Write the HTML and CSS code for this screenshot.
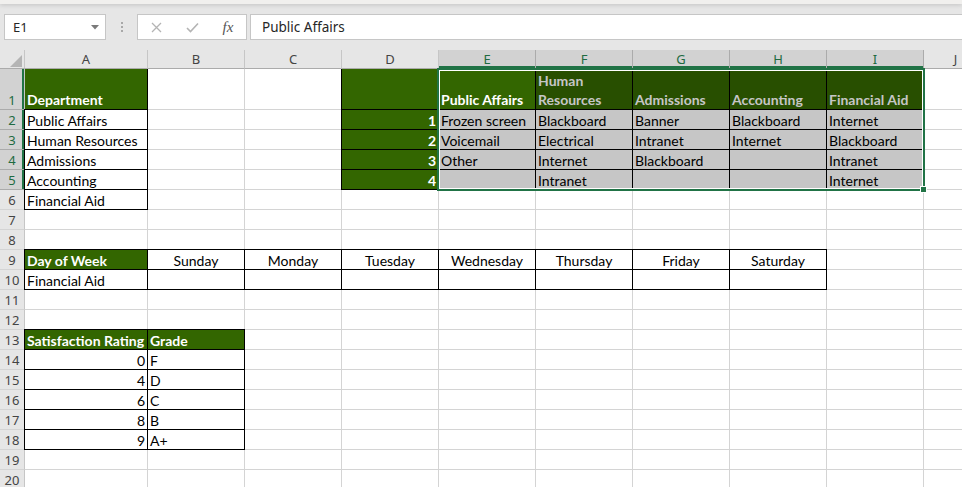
FILE: index.html
```html
<!DOCTYPE html>
<html>
<head>
<meta charset="utf-8">
<link rel="stylesheet" href="styles.css">
</head>
<body>
<div class="app">
  <div class="top"></div>
  <div class="fbar">
    <div class="namebox"><span>E1</span><svg class="caret" width="8" height="5" viewBox="0 0 8 5"><polygon points="0,0 8,0 4,4.5" fill="#7a7a7a"/></svg></div>
    <div class="grip"><i></i><i></i><i></i></div>
    <div class="btns">
      <span class="btn"><svg width="11" height="11" viewBox="0 0 11 11"><path d="M1 1 L10 10 M10 1 L1 10" stroke="#b4b4b4" stroke-width="1.3" fill="none"/></svg></span>
      <span class="btn"><svg width="13" height="11" viewBox="0 0 13 11"><path d="M1 6 L4.5 9.5 L12 1.5" stroke="#b4b4b4" stroke-width="1.6" fill="none"/></svg></span>
      <span class="btn fx">fx</span>
    </div>
    <div class="formula">Public Affairs</div>
  </div>
  <div class="sheet">
    <div class="corner"><svg width="12" height="12" viewBox="0 0 12 12"><polygon points="12,0 12,12 0,12" fill="#b4b4b4"/></svg></div>
    <div class="ch">A</div><div class="ch">B</div><div class="ch">C</div><div class="ch">D</div>
    <div class="ch on">E</div><div class="ch on">F</div><div class="ch on">G</div><div class="ch on">H</div><div class="ch on">I</div>
    <div class="ch">J</div>

    <div class="rh on">1</div>
    <div class="c t g b nt nl">Department</div><div class="c"></div><div class="c"></div>
    <div class="c t g b nt"></div>
    <div class="c t g b nt">Public Affairs</div>
    <div class="c t gs b nt">Human Resources</div>
    <div class="c t gs b nt">Admissions</div>
    <div class="c t gs b nt">Accounting</div>
    <div class="c t gs b nt">Financial Aid</div>
    <div class="c"></div>

    <div class="rh on">2</div>
    <div class="c b nl">Public Affairs</div><div class="c"></div><div class="c"></div>
    <div class="c g b r">1</div>
    <div class="c s b">Frozen screen</div><div class="c s b">Blackboard</div><div class="c s b">Banner</div><div class="c s b">Blackboard</div><div class="c s b">Internet</div>
    <div class="c"></div>

    <div class="rh on">3</div>
    <div class="c b nl">Human Resources</div><div class="c"></div><div class="c"></div>
    <div class="c g b r">2</div>
    <div class="c s b">Voicemail</div><div class="c s b">Electrical</div><div class="c s b">Intranet</div><div class="c s b">Internet</div><div class="c s b">Blackboard</div>
    <div class="c"></div>

    <div class="rh on">4</div>
    <div class="c b nl">Admissions</div><div class="c"></div><div class="c"></div>
    <div class="c g b r">3</div>
    <div class="c s b">Other</div><div class="c s b">Internet</div><div class="c s b">Blackboard</div><div class="c s b"></div><div class="c s b">Intranet</div>
    <div class="c"></div>

    <div class="rh on">5</div>
    <div class="c b nl">Accounting</div><div class="c"></div><div class="c"></div>
    <div class="c g b r">4</div>
    <div class="c s b"></div><div class="c s b">Intranet</div><div class="c s b"></div><div class="c s b"></div><div class="c s b">Internet</div>
    <div class="c"></div>

    <div class="rh">6</div>
    <div class="c b">Financial Aid</div><div class="c"></div><div class="c"></div><div class="c"></div><div class="c"></div><div class="c"></div><div class="c"></div><div class="c"></div><div class="c"></div><div class="c"></div>

    <div class="rh">7</div>
    <div class="c"></div><div class="c"></div><div class="c"></div><div class="c"></div><div class="c"></div><div class="c"></div><div class="c"></div><div class="c"></div><div class="c"></div><div class="c"></div>

    <div class="rh">8</div>
    <div class="c"></div><div class="c"></div><div class="c"></div><div class="c"></div><div class="c"></div><div class="c"></div><div class="c"></div><div class="c"></div><div class="c"></div><div class="c"></div>

    <div class="rh">9</div>
    <div class="c g b">Day of Week</div>
    <div class="c b ctr">Sunday</div><div class="c b ctr">Monday</div><div class="c b ctr">Tuesday</div><div class="c b ctr">Wednesday</div><div class="c b ctr">Thursday</div><div class="c b ctr">Friday</div><div class="c b ctr">Saturday</div>
    <div class="c"></div><div class="c"></div>

    <div class="rh">10</div>
    <div class="c b">Financial Aid</div>
    <div class="c b"></div><div class="c b"></div><div class="c b"></div><div class="c b"></div><div class="c b"></div><div class="c b"></div><div class="c b"></div>
    <div class="c"></div><div class="c"></div>

    <div class="rh">11</div>
    <div class="c"></div><div class="c"></div><div class="c"></div><div class="c"></div><div class="c"></div><div class="c"></div><div class="c"></div><div class="c"></div><div class="c"></div><div class="c"></div>

    <div class="rh">12</div>
    <div class="c"></div><div class="c"></div><div class="c"></div><div class="c"></div><div class="c"></div><div class="c"></div><div class="c"></div><div class="c"></div><div class="c"></div><div class="c"></div>

    <div class="rh">13</div>
    <div class="c g b gr">Satisfaction Rating</div><div class="c g b nl">Grade</div>
    <div class="c"></div><div class="c"></div><div class="c"></div><div class="c"></div><div class="c"></div><div class="c"></div><div class="c"></div><div class="c"></div>

    <div class="rh">14</div>
    <div class="c b r">0</div><div class="c b">F</div>
    <div class="c"></div><div class="c"></div><div class="c"></div><div class="c"></div><div class="c"></div><div class="c"></div><div class="c"></div><div class="c"></div>

    <div class="rh">15</div>
    <div class="c b r">4</div><div class="c b">D</div>
    <div class="c"></div><div class="c"></div><div class="c"></div><div class="c"></div><div class="c"></div><div class="c"></div><div class="c"></div><div class="c"></div>

    <div class="rh">16</div>
    <div class="c b r">6</div><div class="c b">C</div>
    <div class="c"></div><div class="c"></div><div class="c"></div><div class="c"></div><div class="c"></div><div class="c"></div><div class="c"></div><div class="c"></div>

    <div class="rh">17</div>
    <div class="c b r">8</div><div class="c b">B</div>
    <div class="c"></div><div class="c"></div><div class="c"></div><div class="c"></div><div class="c"></div><div class="c"></div><div class="c"></div><div class="c"></div>

    <div class="rh">18</div>
    <div class="c b r">9</div><div class="c b">A+</div>
    <div class="c"></div><div class="c"></div><div class="c"></div><div class="c"></div><div class="c"></div><div class="c"></div><div class="c"></div><div class="c"></div>

    <div class="rh">19</div>
    <div class="c"></div><div class="c"></div><div class="c"></div><div class="c"></div><div class="c"></div><div class="c"></div><div class="c"></div><div class="c"></div><div class="c"></div><div class="c"></div>

    <div class="rh">20</div>
    <div class="c"></div><div class="c"></div><div class="c"></div><div class="c"></div><div class="c"></div><div class="c"></div><div class="c"></div><div class="c"></div><div class="c"></div><div class="c"></div>

    <div class="sel"></div>
    <div class="handle"></div>
  </div>
</div>
</body>
</html>
```

FILE: styles.css
```css
html, body {
  margin: 0;
  padding: 0;
  background: #ffffff;
}
body {
  width: 962px;
  height: 487px;
  overflow: hidden;
  font-family: Lato, "Liberation Sans", sans-serif;
}
.app {
  width: 962px;
  overflow: hidden;
}
.top {
  position: relative;
  height: 4px;
  background: #f1f0ee;
  box-shadow: 0 1px 4px rgba(0, 0, 0, 0.16);
}
.fbar {
  height: 46px;
  box-sizing: border-box;
  background: #e6e6e6;
  display: flex;
  align-items: flex-start;
  padding: 10px 0 0 4px;
  font-family: "Noto Sans", "Open Sans", sans-serif;
  font-size: 13px;
  color: #262626;
}
.namebox {
  width: 102px;
  height: 26px;
  box-sizing: border-box;
  border: 1px solid #c6c6c6;
  background: #fff;
  display: flex;
  align-items: center;
  justify-content: space-between;
  padding: 0 6px 0 8px;
}
.grip {
  width: 31px;
  display: flex;
  flex-direction: column;
  align-items: center;
  gap: 2px;
  padding-top: 8px;
}
.grip i {
  display: block;
  width: 2px;
  height: 2px;
  background: #a8a8a8;
}
.btns {
  width: 110px;
  height: 26px;
  box-sizing: border-box;
  border: 1px solid #c6c6c6;
  background: #fff;
  display: flex;
  align-items: center;
}
.btn {
  width: 36px;
  display: flex;
  justify-content: center;
  align-items: center;
}
.btn.fx {
  font-family: "Liberation Serif", serif;
  font-style: italic;
  font-size: 15px;
  color: #555;
}
.formula {
  flex: 1;
  margin-left: 3px;
  height: 26px;
  box-sizing: border-box;
  border: 1px solid #c6c6c6;
  border-right: none;
  background: #fff;
  padding-left: 11px;
  line-height: 24px;
  font-size: 13.5px;
}
.sheet {
  position: relative;
  width: 988px;
  display: grid;
  grid-template-columns: 25px 123px repeat(8, 97px) 64px;
  grid-template-rows: 19px 41px repeat(19, 20px);
  font-size: 14px;
}
.corner {
  background: #e6e6e6;
  border-right: 1px solid #c6c6c6;
  border-bottom: 1px solid #ababab;
  display: flex;
  align-items: flex-end;
  justify-content: flex-end;
  padding: 0 2px 1px 0;
}
.ch {
  background: #e6e6e6;
  border-right: 1px solid #c6c6c6;
  border-bottom: 1px solid #ababab;
  text-align: center;
  line-height: 19px;
  color: #444;
  font-family: "Noto Sans", "Open Sans", sans-serif;
  font-size: 13px;
}
.ch.on {
  background: #d2d2d2;
  color: #1e6b41;
  border-right-color: #ababab;
  box-shadow: inset 0 -2px #217346;
}
.rh {
  background: #e6e6e6;
  border-right: 1px solid #c6c6c6;
  border-bottom: 1px solid #d4d4d4;
  display: flex;
  align-items: flex-end;
  justify-content: center;
  line-height: 17px;
  color: #444;
  font-family: "Noto Sans", "Open Sans", sans-serif;
  font-size: 13px;
}
.rh.on {
  background: #d2d2d2;
  color: #1e6b41;
  border-bottom-color: #ababab;
  box-shadow: inset -2px 0 #217346;
}
.c {
  border-right: 1px solid #d4d4d4;
  border-bottom: 1px solid #d4d4d4;
  padding: 0 2px;
  line-height: 17px;
  white-space: nowrap;
  overflow: hidden;
  color: #000;
  display: flex;
  align-items: flex-end;
  min-width: 0;
}
.c.t {
  line-height: 19px;
  white-space: normal;
}
.c.r { justify-content: flex-end; }
.c.ctr { justify-content: center; }
.g {
  background: #336600;
  color: #fff;
  font-weight: bold;
}
.gs {
  background: #284f00;
  color: #c6c6c6;
  font-weight: bold;
}
.s { background: #c6c6c6; }
.c.b {
  border-right-color: #000;
  border-bottom-color: #000;
  box-shadow: -1px 0 #000, 0 -1px #000, -1px -1px #000;
}
.c.b.nt { box-shadow: -1px 0 #000; }
.c.b.nl { box-shadow: 0 -1px #000, -1px -1px #000; }
.c.b.nt.nl { box-shadow: none; }
.c.b.gr { border-right-color: #336600; }
.sel {
  position: absolute;
  left: 437px;
  top: 18px;
  width: 488px;
  height: 123px;
  box-sizing: border-box;
  border: 2px solid #217346;
  box-shadow: inset 0 0 0 1px #ffffff;
  pointer-events: none;
}
.handle {
  position: absolute;
  left: 920px;
  top: 136px;
  width: 7px;
  height: 7px;
  box-sizing: border-box;
  background: #217346;
  border: 1px solid #ffffff;
}
```
